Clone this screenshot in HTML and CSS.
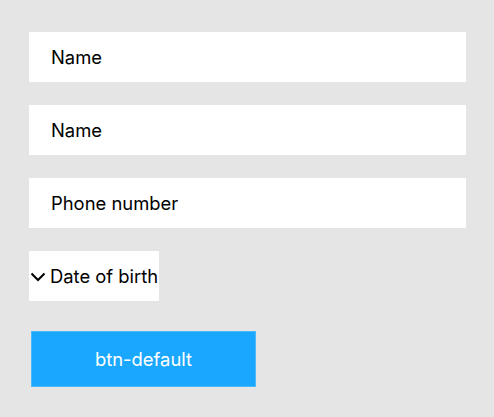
FILE: index.html
```html
<!DOCTYPE html>
<html>
<head>
<meta charset="utf-8">
<link rel="stylesheet" href="styles.css">
</head>
<body>
<div class="form">
  <div class="field"><span class="label">Name</span></div>
  <div class="field"><span class="label">Name</span></div>
  <div class="field"><span class="label">Phone number</span></div>
  <div class="select">
    <svg class="chev" width="16" height="10" viewBox="0 0 16 10"><path d="M1.5 1.5 L8 8 L14.5 1.5" fill="none" stroke="#000" stroke-width="2"/></svg>
    <span class="label">Date of birth</span>
  </div>
  <button class="btn">btn-default</button>
</div>
</body>
</html>
```
FILE: styles.css
```css
html, body {
  margin: 0;
  padding: 0;
  background: #e5e5e5;
}
body {
  font-family: Inter, "Noto Sans", sans-serif;
  width: 494px;
  height: 417px;
  overflow: hidden;
}
.form {
  display: flex;
  flex-direction: column;
  align-items: flex-start;
  gap: 23px;
  padding: 32px 28px 0 29px;
}
.field {
  width: 437px;
  height: 50px;
  background: #fff;
  display: flex;
  align-items: center;
  padding-left: 22px;
  box-sizing: border-box;
}
.label {
  font-size: 18.4px;
  color: #000;
  line-height: 1;
}
.select {
  height: 50px;
  background: #fff;
  display: flex;
  align-items: center;
  gap: 4px;
  padding: 0 1px 0 1px;
}
.chev {
  display: block;
  flex: none;
  margin-top: 1px;
}
.btn {
  margin-top: 7px;
  margin-left: 2px;
  width: 225px;
  height: 56px;
  background: #1aa7ff;
  border: 1px solid #4cb9ff;
  color: #fff;
  font-family: Inter, "Noto Sans", sans-serif;
  font-size: 18.4px;
  padding: 0;
}
```
